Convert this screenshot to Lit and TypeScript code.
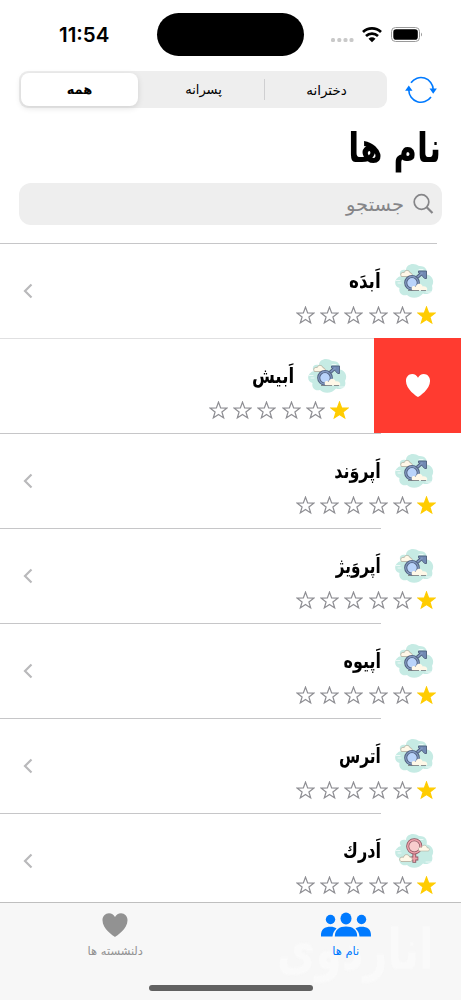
import { LitElement, html, css, svg } from "lit";
import { customElement, property } from "lit/decorators.js";
import { styleMap } from "lit/directives/style-map.js";
import { classMap } from "lit/directives/class-map.js";

const STAR = "M10 1.2 12.25 7.3 18.7 7.55 13.6 11.5 15.4 17.8 10 14.15 4.6 17.8 6.4 11.5 1.3 7.55 7.75 7.3Z";
const HEART = "M14 26C12.5 25 1 17.8 1 8.6 1 4.2 4 1.2 7.7 1.2c2.900 0 5 1.500 6.300 4 1.300-2.500 3.400-4 6.300-4C24 1.200 27 4.200 27 8.600 27 17.800 15.500 25 14 26Z";

interface Entry {
  name: string;
  scale: number;
  girl?: boolean;
  swiped?: boolean;
}

const entries: Entry[] = [
  { name: "اَبدَه", scale: 0.82 },
  { name: "اَبیش", scale: 0.81, swiped: true },
  { name: "اَپروَند", scale: 0.78 },
  { name: "اَپروَیژ", scale: 0.74 },
  { name: "اَپیوه", scale: 0.78 },
  { name: "اَترس", scale: 0.75 },
  { name: "اَدرك", scale: 0.79, girl: true },
];

const blob = svg`<path fill="#c6ebe4" d="M7 14C4 10 7 6.500 12 8C12 2 20 0 25 4C31 3.500 34 8 32.500 12.500C38 13 41 19 38 24C40 30 34 33.500 29 31.500C25 37 16 36.500 13 33C7 34.500 4.500 30 5.500 26C-.5 25-.5 16 7 14Z"/>
  <path fill="none" stroke="#edf9f7" stroke-width="1" stroke-linecap="round" d="M2 18.500h4M4 21h3M32 30h5M25 7.500h4"/>`;

const maleIcon = svg`${blob}
  <path d="M7.500 14.500c-2-3 .5-4.500 2.700-4 1-3.200 5.500-2.400 5.800.3 2.700 0 3 3.700 1 3.700Z" fill="#fff8e8" stroke="#a9a291" stroke-width=".7"/>
  <path d="M23 15.500 28 11" stroke="#4f5f7d" stroke-width="3.600"/>
  <path d="M24.500 9h8v7.500h-1.800l-2-2-1.800-2.200-2.400-1.500Z" fill="#7089b3" stroke="#4f5f7d" stroke-width=".9"/>
  <path d="M22.500 16 28.500 10.700" stroke="#8299c2" stroke-width="1.600"/>
  <circle cx="18" cy="20.800" r="6.300" fill="#b9d3fa" stroke="#4f5f7d" stroke-width="3.100"/>
  <circle cx="18" cy="20.800" r="6.300" fill="none" stroke="#8299c2" stroke-width="1.300"/>
  <path d="M18.500 28.500c-2.500-4 1.300-5.500 3.200-3.800.8-3.900 6-3.900 7-.2 4-1 6 3.500 3.500 4Z" fill="#fff8e8"/>
  <path d="M14 28.500h11M27 28.500h5" stroke="#74757a" stroke-width=".8"/>`;

const femaleIcon = svg`${blob}
  <path d="M20.300 21v9.800M16.300 26.500h8" stroke="#8a5560" stroke-width="3.800"/>
  <path d="M20.300 20v10M17 26.500h6.600" stroke="#eea0a9" stroke-width="2"/>
  <circle cx="20.300" cy="14.300" r="6.600" fill="#f8cdcd" stroke="#8a5560" stroke-width="3"/>
  <circle cx="20.300" cy="14.300" r="6.600" fill="none" stroke="#eea0a9" stroke-width="1.500"/>
  <path d="M25.300 19c-2-2.500 0-4.300 2.300-3.500.8-3.300 5.200-2.800 5.500.2 3 0 3 3 1 3.300Z" fill="#fff8e8" stroke="#a9a291" stroke-width=".5"/>
  <path d="M7 29.500c-3-2.500-.5-5 2.500-4.200.8-3.800 5.500-3.300 6.200-.2 3-.4 3.500 3.900 1 4.400Z" fill="#fff8e8" stroke="#a9a291" stroke-width=".7"/>`;

@customElement("name-row")
export class NameRow extends LitElement {
  @property({ attribute: false }) entry!: Entry;
  @property({ type: Boolean }) first = false;

  static styles = css`
    :host { display: block; height: 95px; box-sizing: border-box; }
    .row { height: 95px; display: flex; box-sizing: border-box; }
    .action { width: 87px; background: #ff3b30; display: flex; align-items: center; justify-content: center; flex: none; }
    .content { flex: 1; display: grid; grid-template-columns: 1fr 33px; box-sizing: border-box; padding-inline-start: 24px; background: linear-gradient(#c6c6c8, #c6c6c8) left top / calc(100% - 80px) 1px no-repeat; }
    .first .content { background-size: calc(100% - 24px) 1px; }
    .full .content { background-size: 100% 1px; background-image: linear-gradient(#e0e0e1, #e0e0e1); }
    .head { display: flex; align-items: center; height: 40px; padding-top: 18px; gap: 13px; padding-inline-start: 2px; }
    .pic { width: 41px; height: 38px; flex: none; }
    .name { font-size: 20.5px; font-weight: 700; line-height: 38px; white-space: nowrap; transform-origin: right center; }
    .stars { display: flex; gap: 5.200px; margin-top: 5px; padding-inline-start: 1px; }
    .stars svg { width: 19px; height: 19px; flex: none; }
    .on { fill: #ffcc00; stroke: #ffcc00; }
    .off { fill: none; stroke: #8e8e93; }
    .chev { align-self: start; margin-top: 40px; width: 10px; height: 16px; }
  `;

  render() {
    const e = this.entry;
    return html`<div class=${classMap({ row: true, full: !!e.swiped, first: this.first })}>
      ${e.swiped
        ? html`<div class="action"><svg width="26" height="25" viewBox="0 0 28 27"><path d=${HEART} fill="#fff" /></svg></div>`
        : ""}
      <div class="content">
        <div>
          <div class="head">
            <svg class="pic" viewBox="0 0 41 38">${e.girl ? femaleIcon : maleIcon}</svg>
            <span class="name" style=${styleMap({ transform: `scaleX(${e.scale})` })}>${e.name}</span>
          </div>
          <div class="stars">
            ${[1, 0, 0, 0, 0, 0].map((s) => html`<svg viewBox="0 0 20 20"><path class=${s ? "on" : "off"} stroke-width="1.300" d=${STAR} /></svg>`)}
          </div>
        </div>
        ${e.swiped
          ? ""
          : html`<svg class="chev" viewBox="0 0 10 16"><path d="M8.500 1.500 2 8l6.500 6.500" fill="none" stroke="#b9b9bb" stroke-width="2.200" /></svg>`}
      </div>
    </div>`;
  }
}

@customElement("app-root")
export class AppRoot extends LitElement {
  static styles = css`
    :host { display: flex; flex-direction: column; width: 461px; height: 1000px; overflow: hidden; background: #fff; direction: rtl; font-family: "DejaVu Sans", sans-serif; color: #000; }
    .status { direction: ltr; display: flex; align-items: center; height: 43px; padding: 13px 38px 0 59px; margin-bottom: 15px; flex: none; box-sizing: content-box; }
    .time { width: 98px; font: 600 20.5px "Inter", sans-serif; }
    .island { width: 147px; height: 43px; border-radius: 22px; background: #000; }
    .signals { margin-left: auto; }
    .tools { display: flex; align-items: center; padding: 0 24px 0 19px; justify-content: space-between; height: 37px; flex: none; }
    .seg { direction: ltr; display: grid; grid-template-columns: 119px 124px 1fr; width: 368px; height: 37px; border-radius: 9px; background: #eee; padding: 2px; box-sizing: border-box; font-size: 13px; }
    .seg span { display: flex; align-items: center; justify-content: center; height: 33px; }
    .seg .sel { background: #fff; border-radius: 8px; font-weight: 700; width: 117px; box-shadow: 0 2px 6px #0000001f; }
    .seg .mid { padding-left: 3px; }
    .seg .last { font-size: 13.5px; padding-left: 4px; background: linear-gradient(#cfcfd1, #cfcfd1) left center / 1px 21px no-repeat; }
    h1 { margin: 0; padding: 0 20px 0 0; height: 75px; line-height: 80px; font-size: 41px; font-weight: 700; flex: none; transform: scaleX(0.78); transform-origin: 441px center; white-space: nowrap; }
    .search { margin: 0 19px 18px; height: 42px; border-radius: 12px; background: #eee; color: #858588; display: flex; align-items: center; padding: 0 8px; gap: 8px; font-size: 19.5px; flex: none; box-sizing: border-box; }
    .list { flex: 1; overflow: hidden; min-height: 0; }
    .tabs { position: relative; overflow: hidden; height: 98px; box-sizing: border-box; border-top: 1px solid #bfbfbf; background: #f7f7f7; display: grid; grid-template-columns: 1fr 1fr; grid-template-rows: 56px 1fr; flex: none; }
    .veil { position: absolute; right: 28px; top: 12px; font-size: 56px; line-height: 70px; font-weight: 700; color: #fafafa; white-space: nowrap; transform: scaleX(0.75); transform-origin: right center; filter: blur(1px); }
    .tab { position: relative; display: flex; flex-direction: column; align-items: center; padding-top: 9px; font-size: 11.5px; line-height: 14px; color: #929292; gap: 6px; }
    .active { color: #007aff; }
    .home { position: relative; grid-column: 1 / 3; justify-self: center; width: 164px; height: 6px; border-radius: 3px; background: #616161; margin-top: 26px; }
  `;

  render() {
    return html`
      <div class="status">
        <span class="time">11:54</span>
        <div class="island"></div>
        <svg class="signals" width="94" height="24" viewBox="0 0 94 24">
          <g fill="#c9c9c9"><rect x="2" y="15" width="4" height="4" rx="1.500"/><rect x="8.300" y="15" width="4" height="4" rx="1.500"/><rect x="14.500" y="15" width="4" height="4" rx="1.500"/><rect x="20.500" y="15" width="4" height="4" rx="1.500"/></g>
          <g fill="none" stroke="#000" stroke-width="2.700"><path d="M34 9a13 13 0 0 1 18 0M37 13a8.800 8.800 0 0 1 12 0"/></g>
          <path d="M39.500 15.700a5.400 5.400 0 0 1 7 0L43 19.200Z"/>
          <rect x="62.500" y="4.500" width="28" height="14" rx="4" fill="none" stroke="#9a9a9a"/><rect x="64.300" y="6.300" width="24.500" height="10.400" rx="2.800"/><path d="M92 9.400v4.200q2-2 0-4.200" fill="#999"/>
        </svg>
      </div>
      <div class="tools">
        <svg width="32" height="28" viewBox="0 0 32 28" fill="none" stroke="#007aff" stroke-width="1.600">
          <path d="M6 6.800A12.200 12.200 0 0 1 28.200 13.500M3.800 14a12.200 12.200 0 0 0 22.200 7"/>
          <path fill="#007aff" stroke="none" d="M24.500 12.500h7.400L28.200 17.700ZM.1 14.800h7.400L3.800 9.600Z"/>
        </svg>
        <div class="seg"><span class="sel">همه</span><span class="mid">پسرانه</span><span class="last">دخترانه</span></div>
      </div>
      <h1>نام ها</h1>
      <div class="search">
        <svg width="22" height="22" viewBox="0 0 22 22" fill="none" stroke="#858588" stroke-width="1.700"><circle cx="9.500" cy="9" r="7.300"/><path stroke-width="2.200" d="m14.700 14.200 5.800 5.800"/></svg>
        <span>جستجو</span>
      </div>
      <div class="list">
        ${entries.map((e, i) => html`<name-row .entry=${e} ?first=${i === 0}></name-row>`)}
      </div>
      <div class="tabs">
        <div class="veil" aria-hidden="true">اناردوی</div>
        <div class="tab active">
          <svg width="52" height="26" viewBox="0 0 52 26" fill="#007aff"><circle cx="10.500" cy="7.500" r="4.700"/><circle cx="41.500" cy="7.500" r="4.700"/><path d="M1 24.500C.5 17 5 14.800 10.500 14.800c2.500 0 4.500.6 6 1.700q-3.500 3-4 8ZM51 24.500C51.500 17 47 14.800 41.500 14.800c-2.500 0-4.500.6-6 1.700q3.500 3 4 8Z"/><ellipse cx="26" cy="6.500" rx="5.500" ry="6"/><path d="M14.800 24.500C14.800 17.500 19.500 14.500 26 14.500s11.200 3 11.200 10Z"/></svg>
          <span>نام ها</span>
        </div>
        <div class="tab">
          <svg width="28" height="26" viewBox="0 0 28 27"><path d=${HEART} fill="#929292"/></svg>
          <span>دلنشسته ها</span>
        </div>
        <div class="home"></div>
      </div>`;
  }
}
